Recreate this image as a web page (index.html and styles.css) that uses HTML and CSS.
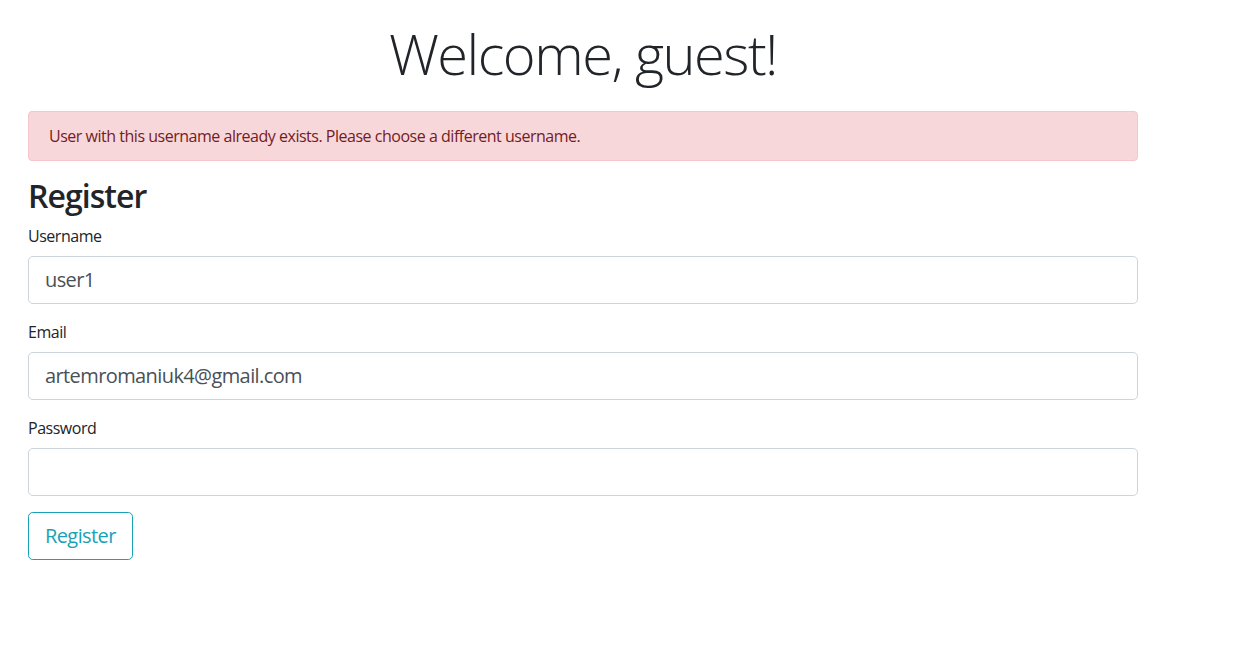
FILE: index.html
```html
<!DOCTYPE html>
<html lang="en">
<head>
<meta charset="utf-8">
<title>Register</title>
<link rel="stylesheet" href="styles.css">
</head>
<body>
<div class="page">
  <h1 class="welcome">Welcome, guest!</h1>
  <div class="alert">User with this username already exists. Please choose a different username.</div>
  <h2 class="title">Register</h2>
  <form class="form">
    <div class="group">
      <label class="label" for="username">Username</label>
      <input class="field" id="username" type="text" value="user1">
    </div>
    <div class="group">
      <label class="label" for="email">Email</label>
      <input class="field" id="email" type="email" value="artemromaniuk4@gmail.com">
    </div>
    <div class="group">
      <label class="label" for="password">Password</label>
      <input class="field" id="password" type="password" value="">
    </div>
    <button class="btn" type="button">Register</button>
  </form>
</div>
</body>
</html>
```
FILE: styles.css
```css
* { box-sizing: border-box; }
html, body { margin: 0; padding: 0; background: #fff; }
body {
  font-family: "Open Sans", "Noto Sans", "Liberation Sans", sans-serif;
  font-size: 16px;
  line-height: 1.5;
  letter-spacing: -0.03em;
  color: #212529;
}
.page {
  width: 1110px;
  margin-left: 28px;
  padding-top: 20px;
}
.welcome {
  margin: 0 0 24px;
  font-size: 56px;
  font-weight: 300;
  line-height: 1.2;
  letter-spacing: -0.027em;
  text-align: center;
}
.alert {
  height: 50px;
  padding: 12px 20px;
  margin-bottom: 16px;
  border: 1px solid #f5c6cb;
  border-radius: 4px;
  background: #f8d7da;
  color: #721c24;
}
.title {
  margin: 0 0 8px;
  font-size: 32px;
  font-weight: 600;
  line-height: 1.2;
  letter-spacing: -0.03em;
}
.form { margin: 0; }
.group {
  display: flex;
  flex-direction: column;
  margin-bottom: 16px;
}
.label {
  margin-bottom: 8px;
  line-height: 24px;
}
.field {
  height: 48px;
  padding: 8px 16px;
  font-family: inherit;
  font-size: 20px;
  line-height: 1.5;
  letter-spacing: -0.03em;
  color: #495057;
  background: #fff;
  border: 1px solid #ced4da;
  border-radius: 4.8px;
  outline: none;
}
.btn {
  height: 48px;
  padding: 8px 16px;
  font-family: inherit;
  font-size: 20px;
  line-height: 1.5;
  letter-spacing: -0.03em;
  color: #17a2b8;
  background: transparent;
  border: 1px solid #17a2b8;
  border-radius: 4.8px;
  cursor: pointer;
}
```
